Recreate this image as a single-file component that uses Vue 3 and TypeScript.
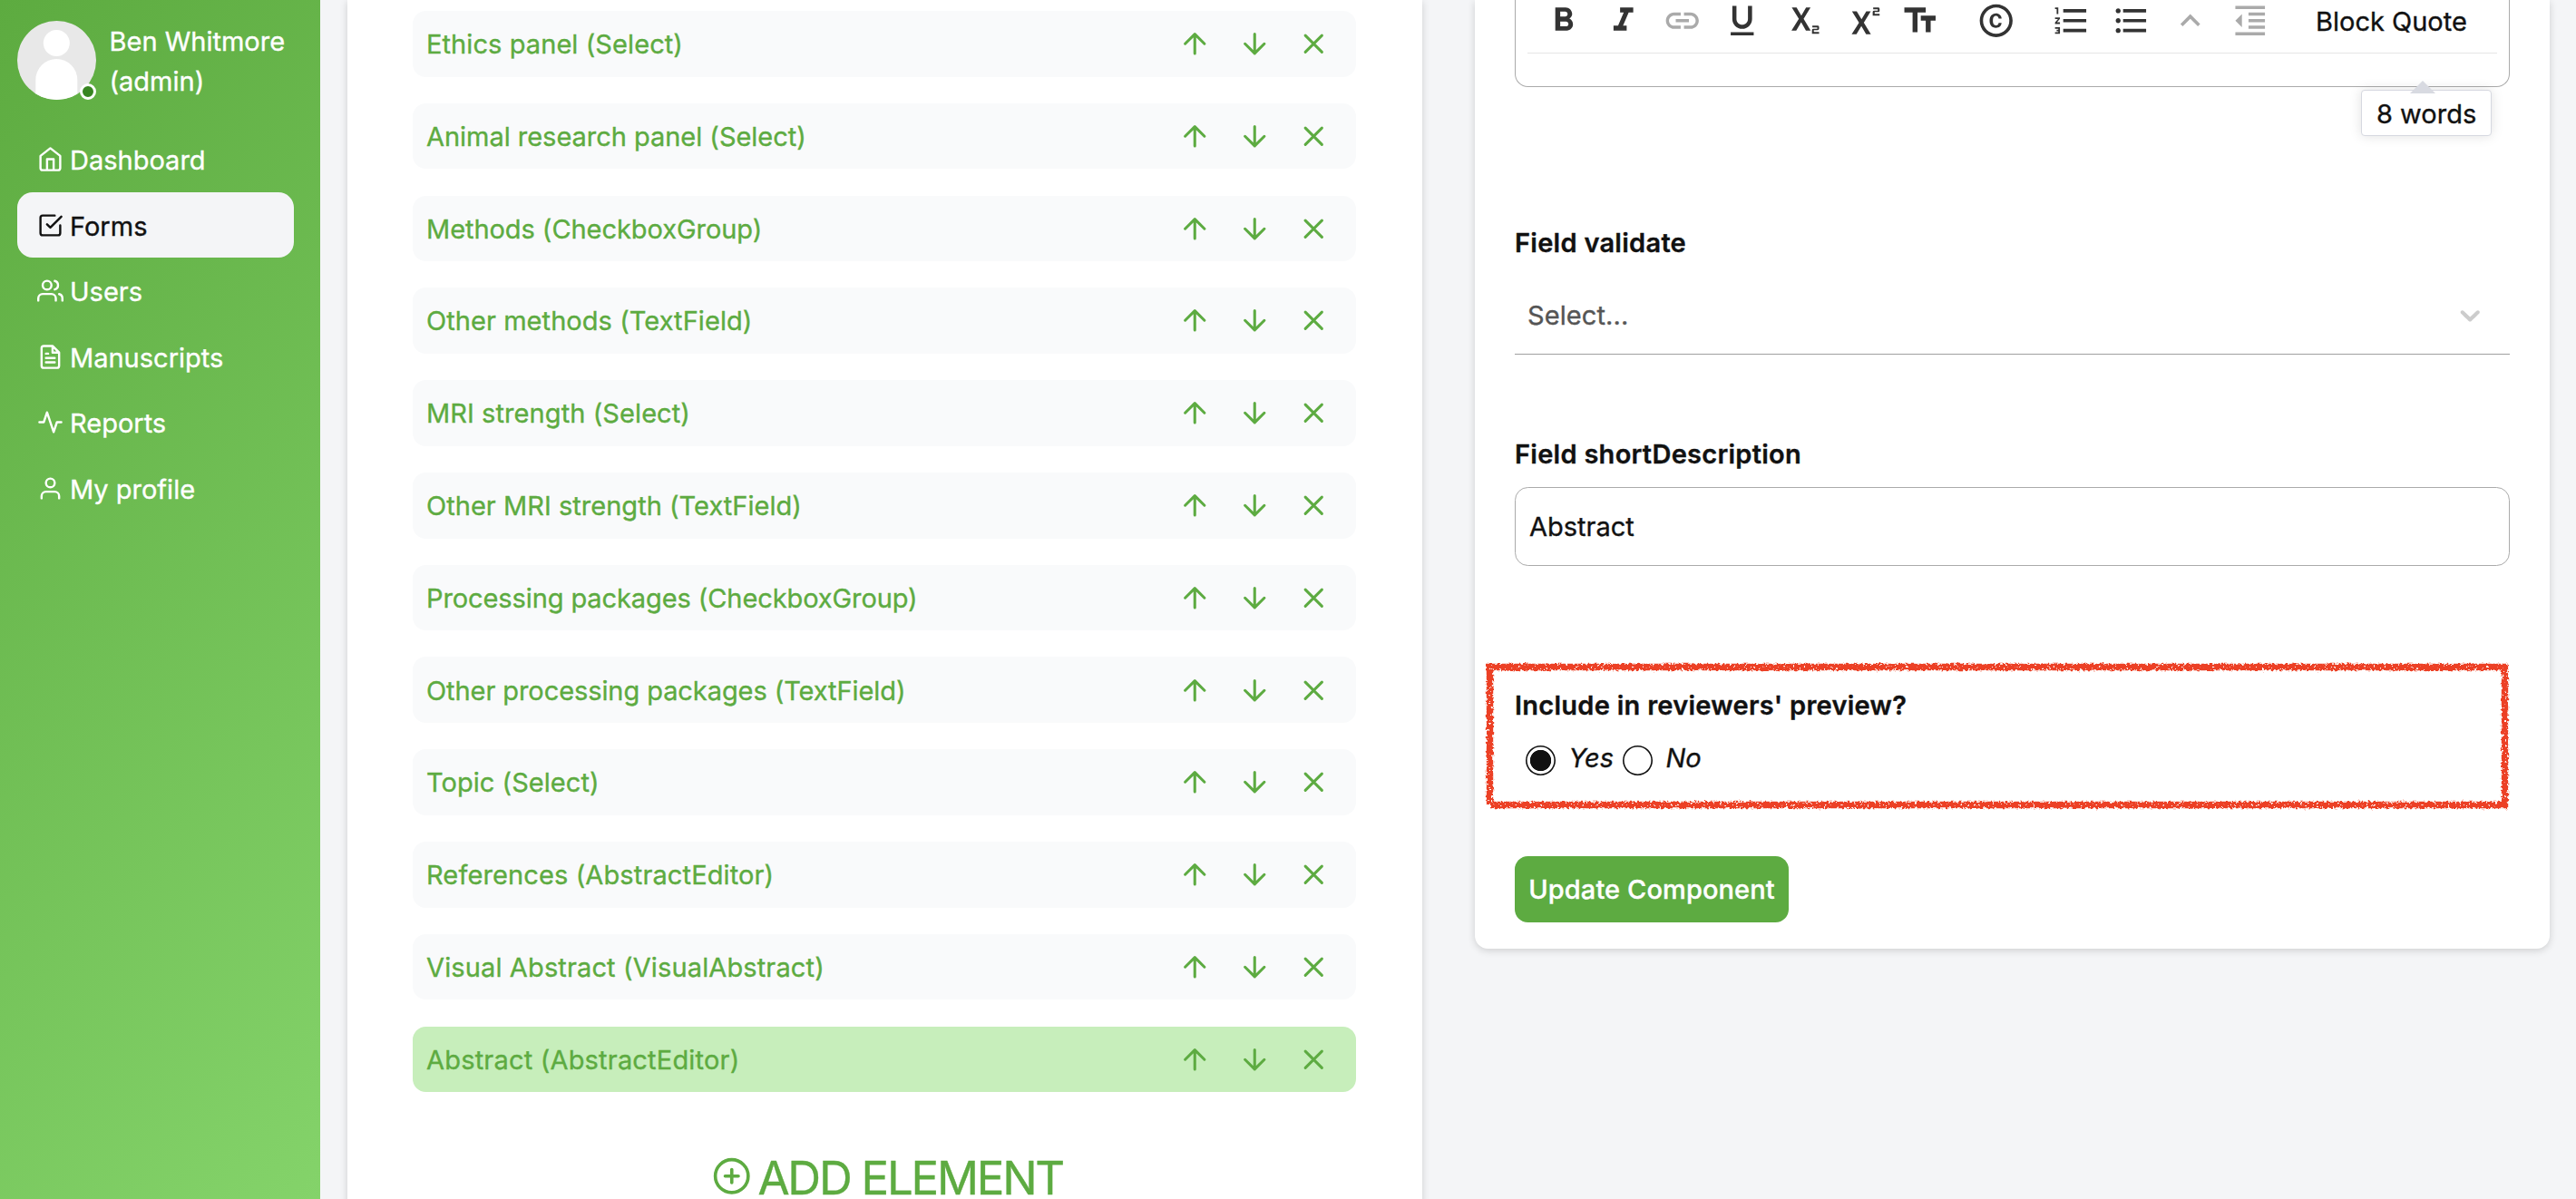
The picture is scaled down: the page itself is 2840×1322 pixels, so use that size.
<script setup lang="ts">
import { ref } from 'vue'

interface NavItem {
  label: string
  icon: string
  active?: boolean
}

const nav: NavItem[] = [
  { label: 'Dashboard', icon: 'M3 9l9-7 9 7v11a2 2 0 0 1-2 2H5a2 2 0 0 1-2-2zM9 22V12h6v10' },
  { label: 'Forms', icon: 'M9 11l3 3L22 4M21 12v7a2 2 0 0 1-2 2H5a2 2 0 0 1-2-2V5a2 2 0 0 1 2-2h11', active: true },
  { label: 'Users', icon: 'M17 21v-2a4 4 0 0 0-4-4H5a4 4 0 0 0-4 4v2M9 3a4 4 0 1 0 0 8 4 4 0 0 0 0-8zM23 21v-2a4 4 0 0 0-3-3.87M16 3.13a4 4 0 0 1 0 7.75' },
  { label: 'Manuscripts', icon: 'M14 2H6a2 2 0 0 0-2 2v16a2 2 0 0 0 2 2h12a2 2 0 0 0 2-2V8zM14 2v6h6M16 13H8M16 17H8M10 9H8' },
  { label: 'Reports', icon: 'M22 12h-4l-3 9L9 3l-3 9H2' },
  { label: 'My profile', icon: 'M20 21v-2a4 4 0 0 0-4-4H8a4 4 0 0 0-4 4v2M12 3a4 4 0 1 0 0 8 4 4 0 0 0 0-8z' },
]

interface FormElement {
  title: string
  // letter spacing in pixels
  tracking: number
}

const elements: FormElement[] = [
  { title: 'Ethics panel (Select)', tracking: 0.08 },
  { title: 'Animal research panel (Select)', tracking: -0.03 },
  { title: 'Methods (CheckboxGroup)', tracking: -0.06 },
  { title: 'Other methods (TextField)', tracking: 0.06 },
  { title: 'MRI strength (Select)', tracking: 0.08 },
  { title: 'Other MRI strength (TextField)', tracking: 0.03 },
  { title: 'Processing packages (CheckboxGroup)', tracking: -0.1 },
  { title: 'Other processing packages (TextField)', tracking: -0.08 },
  { title: 'Topic (Select)', tracking: 0.04 },
  { title: 'References (AbstractEditor)', tracking: 0.12 },
  { title: 'Visual Abstract (VisualAbstract)', tracking: 0.13 },
  { title: 'Abstract (AbstractEditor)', tracking: 0.19 },
]
const selected = ref(11)

const actions = ['M12 19V5M5 12l7-7 7 7', 'M12 5v14M19 12l-7 7-7-7', 'M18 6L6 18M6 6l12 12']

interface Tool {
  name: string
  d: string
  muted?: boolean
}

const tools: Tool[][] = [
  [
    { name: 'Bold', d: 'M15.6 10.79c.97-.67 1.65-1.77 1.65-2.79 0-2.26-1.75-4-4-4H7v14h7.04c2.09 0 3.71-1.7 3.71-3.79 0-1.52-.86-2.82-2.15-3.42zM10 6.5h3c.83 0 1.5.67 1.5 1.5s-.67 1.5-1.5 1.5h-3v-3zm3.5 9H10v-3h3.5c.83 0 1.5.67 1.5 1.5s-.67 1.5-1.5 1.5z' },
    { name: 'Italic', d: 'M10 4v3h2.21l-3.42 8H6v3h8v-3h-2.21l3.42-8H18V4z' },
    { name: 'Link', d: 'M3.9 12c0-1.71 1.39-3.1 3.1-3.1h4V7H7c-2.76 0-5 2.24-5 5s2.24 5 5 5h4v-1.9H7c-1.71 0-3.1-1.39-3.1-3.1zM8 13h8v-2H8v2zm9-6h-4v1.9h4c1.71 0 3.1 1.39 3.1 3.1s-1.39 3.1-3.1 3.1h-4V17h4c2.76 0 5-2.24 5-5s-2.24-5-5-5z', muted: true },
    { name: 'Underline', d: 'M12 17c3.31 0 6-2.69 6-6V3h-2.5v8c0 1.93-1.57 3.5-3.5 3.5S8.5 12.93 8.5 11V3H6v8c0 3.31 2.69 6 6 6zm-7 2v2h14v-2H5z' },
    { name: 'Subscript', d: 'M6.3 4h2.9l2.9 4.9L15 4h2.7l-4.2 6.9 4.3 7.1h-2.9L12 13l-3 5H6.1l4.5-7.1zM18.8 15h3.2q.9 0 .9.8v1.2q0 .8-.9.8h-2.3v1.1h3.2v1.1h-4.3v-2.3q0-.8.9-.8h2.3v-.8h-3z' },
    { name: 'Superscript', d: 'M6.5 6.3h2.9l2.9 4.9 2.9-4.9h2.7l-4.2 6.9 4.3 7.1h-2.9l-2.9-5-3 5H6.3l4.5-7.1zM19.4 4h3q.9 0 .9.8V6q0 .8-.9.8h-2.1v1.1h3V9h-4.2V6.7q0-.8.9-.8h2.2v-.8h-2.8z' },
    { name: 'Small caps', d: 'M2.5 4v3h5v12h3V7h5V4h-13zm19 5h-9v3h3v7h3v-7h3V9z' },
  ],
  [
    { name: 'Special characters', d: 'M10.08 10.86c.05-.33.16-.62.3-.87s.34-.46.59-.62c.24-.15.54-.22.91-.23.23.01.44.05.63.13.2.09.38.21.52.36s.25.33.34.53.13.42.14.64h1.79c-.02-.47-.11-.9-.28-1.29s-.4-.73-.7-1.01-.66-.5-1.08-.66-.88-.23-1.39-.23c-.65 0-1.22.11-1.7.34s-.88.53-1.2.92-.56.84-.71 1.36S8 11.29 8 11.87v.27c0 .58.08 1.12.23 1.64s.39.97.71 1.35.72.69 1.2.91 1.05.34 1.7.34c.47 0 .91-.08 1.32-.23s.77-.36 1.08-.63.56-.58.74-.94.29-.74.3-1.15h-1.79c-.01.21-.06.4-.15.58s-.21.33-.36.46-.32.23-.52.3c-.19.07-.39.1-.6.11-.36-.01-.66-.08-.89-.23-.25-.16-.45-.37-.59-.62s-.25-.55-.3-.88-.08-.67-.08-1v-.27c0-.35.03-.68.08-1.01zM12 2C6.48 2 2 6.48 2 12s4.48 10 10 10 10-4.48 10-10S17.52 2 12 2zm0 18c-4.41 0-8-3.59-8-8s3.59-8 8-8 8 3.59 8 8-3.59 8-8 8z' },
  ],
  [
    { name: 'Numbered list', d: 'M2 17h2v.5H3v1h1v.5H2v1h3v-4H2v1zm1-9h1V4H2v1h1v3zm-1 3h1.8L2 13.1v.9h3v-1H3.2L5 10.9V10H2v1zm5-6v2h14V5H7zm0 14h14v-2H7v2zm0-6h14v-2H7v2z' },
    { name: 'Bullet list', d: 'M4 10.5c-.83 0-1.5.67-1.5 1.5s.67 1.5 1.5 1.5 1.5-.67 1.5-1.5-.67-1.5-1.5-1.5zm0-6c-.83 0-1.5.67-1.5 1.5S3.17 7.5 4 7.5 5.5 6.83 5.5 6 4.83 4.5 4 4.5zm0 12c-.83 0-1.5.68-1.5 1.5s.68 1.5 1.5 1.5 1.5-.68 1.5-1.5-.67-1.5-1.5-1.5zM7 19h14v-2H7v2zm0-6h14v-2H7v2zm0-8v2h14V5H7z' },
    { name: 'Join above', d: 'M12 8l-6 6 1.41 1.41L12 10.83l4.59 4.58L18 14z', muted: true },
    { name: 'Outdent', d: 'M11 17h10v-2H11v2zm-8-5l4 4V8l-4 4zm0 9h18v-2H3v2zM3 3v2h18V3H3zm8 6h10V7H11v2zm0 4h10v-2H11v2z', muted: true },
  ],
]
</script>

<template>
  <div class="app">
    <aside class="sidebar">
      <div class="user">
        <div class="avatar">
          <svg viewBox="0 0 87 87">
            <defs><clipPath id="face"><circle cx="43.5" cy="43.5" r="43.5" /></clipPath></defs>
            <g clip-path="url(#face)">
              <rect width="87" height="87" fill="#e8e8e8" />
              <circle cx="43.3" cy="24.5" r="14.5" fill="#fff" />
              <path d="M20.3 87V65a23 23 0 0 1 46 0v22z" fill="#fff" />
            </g>
          </svg>
          <span class="status"></span>
        </div>
        <div class="name">Ben Whitmore<br />(admin)</div>
      </div>
      <nav>
        <a v-for="n in nav" :key="n.label" :class="['nav-item', { active: n.active }]">
          <svg viewBox="0 0 24 24" class="line"><path :d="n.icon" /></svg>
          <span>{{ n.label }}</span>
        </a>
      </nav>
    </aside>

    <main class="content">
      <section class="card builder">
        <ul>
          <li v-for="(el, i) in elements" :key="el.title" :class="{ selected: i === selected }" @click="selected = i">
            <span class="el-name" :style="{ letterSpacing: el.tracking + 'px' }">{{ el.title }}</span>
            <svg v-for="a in actions" :key="a" viewBox="0 0 24 24" class="line"><path :d="a" /></svg>
          </li>
        </ul>
        <div class="add">
          <svg viewBox="0 0 24 24" class="line"><circle cx="12" cy="12" r="10" /><path d="M12 8v8M8 12h8" /></svg>
          <span>ADD ELEMENT</span>
        </div>
      </section>

      <section class="card props">
        <div class="editor">
          <div class="toolbar">
            <div v-for="(g, i) in tools" :key="i" class="group">
              <svg v-for="t in g" :key="t.name" viewBox="0 0 24 24" :class="{ muted: t.muted }"><path :d="t.d" /></svg>
            </div>
            <span class="quote">Block Quote</span>
          </div>
          <div class="counter">8 words</div>
        </div>

        <div class="label validate">Field validate</div>
        <div class="select">
          <span>Select...</span>
          <svg viewBox="0 0 20 20"><path d="M4.516 7.548c0.436-0.446 1.043-0.481 1.576 0l3.908 3.747 3.908-3.747c0.533-0.481 1.141-0.446 1.574 0 0.436 0.445 0.408 1.197 0 1.615-0.406 0.418-4.695 4.502-4.695 4.502-0.217 0.223-0.502 0.335-0.787 0.335s-0.570-0.112-0.789-0.335c0 0-4.287-4.084-4.695-4.502s-0.436-1.170 0-1.615z" /></svg>
        </div>

        <div class="label short">Field shortDescription</div>
        <div class="input">Abstract</div>

        <div class="preview">
          <div class="label">Include in reviewers' preview?</div>
          <div class="radios">
            <span class="radio on"></span><em class="yes">Yes</em>
            <span class="radio"></span><em>No</em>
          </div>
          <svg class="marker" viewBox="0 0 1136 170">
            <defs>
              <filter id="crayon" x="0" y="0" width="1136" height="170" filterUnits="userSpaceOnUse" color-interpolation-filters="sRGB">
                <feTurbulence type="fractalNoise" baseFrequency="0.35" numOctaves="2" seed="7" result="n" />
                <feDisplacementMap in="SourceGraphic" in2="n" scale="5" xChannelSelector="R" yChannelSelector="G" result="d" />
                <feTurbulence type="fractalNoise" baseFrequency="0.4" numOctaves="2" seed="3" />
                <feColorMatrix values="0 0 0 0 0  0 0 0 0 0  0 0 0 0 0  0 0 0 -14 10.2" result="m" />
                <feComposite in="d" in2="m" operator="in" />
              </filter>
            </defs>
            <g filter="url(#crayon)" stroke="#ec4025" stroke-width="7.4" fill="none">
              <path d="M4 8.5H1131M8.5 5V160M9 160.5H1131M1127.5 5V164" />
            </g>
          </svg>
        </div>

        <button>Update Component</button>
      </section>
    </main>
  </div>
</template>

<style>
body {
  margin: 0;
  background: #f4f5f7;
}
</style>

<style scoped>
.app {
  display: flex;
  width: 2840px;
  height: 1322px;
  overflow: hidden;
  background: #f4f5f7;
  color: #111;
  font: 400 29px/43.5px Inter, 'Noto Sans', sans-serif;
  -webkit-text-stroke: 0.35px currentColor;
}
svg {
  display: block;
  flex: none;
}
.line {
  fill: none;
  stroke: currentColor;
  stroke-width: 2;
  stroke-linecap: round;
  stroke-linejoin: round;
}
.sidebar {
  flex: none;
  box-sizing: border-box;
  width: 353px;
  padding: 23px 29px 0 19px;
  background: linear-gradient(134deg, #5dab40, #84d36a);
  color: #fff;
}
.user {
  display: flex;
  gap: 14.5px;
  height: 116.3px;
}
.avatar {
  position: relative;
  width: 87px;
  height: 87px;
}
.avatar svg {
  width: 87px;
  height: 87px;
}
.status {
  position: absolute;
  right: 0;
  bottom: 0;
  box-sizing: border-box;
  width: 18px;
  height: 18px;
  border: 3px solid #fff;
  border-radius: 50%;
  background: #378521;
}
.name {
  padding-top: 1px;
  white-space: nowrap;
}
.nav-item {
  display: flex;
  align-items: center;
  box-sizing: border-box;
  height: 72.6px;
  padding-left: 22px;
  gap: 7px;
  border-radius: 17px;
}
.nav-item span {
  padding-top: 2px;
}
.nav-item svg {
  width: 29px;
  height: 29px;
}
.nav-item.active {
  background: #f4f5f7;
  color: #111;
}
.nav-item.active span {
  padding-top: 3px;
}
.content {
  display: flex;
  align-items: flex-start;
  gap: 58px;
  padding-left: 30px;
}
.card {
  box-sizing: border-box;
  width: 1185px;
  background: #fff;
  box-shadow: 0 2px 8px rgba(0, 0, 0, 0.16);
}
.builder {
  height: 1400px;
  padding: 12px 73px 0 72px;
}
ul {
  display: flex;
  flex-direction: column;
  gap: 29.2px;
  margin: 0;
  padding: 0;
  list-style: none;
}
li {
  display: flex;
  align-items: center;
  gap: 28.9px;
  box-sizing: border-box;
  height: 72.6px;
  padding: 0 28.5px 0 15px;
  border-radius: 14.5px;
  background: #f9fafb;
  color: #5dab41;
}
li.selected {
  background: #c7eebb;
}
li svg {
  width: 36.5px;
  height: 36.5px;
}
.el-name {
  flex: 1;
  padding-top: 1px;
}
.add {
  display: flex;
  justify-content: center;
  align-items: center;
  gap: 7px;
  margin: 53.5px 0 0 7px;
  color: #5dab41;
  font-size: 51px;
  line-height: 76px;
  letter-spacing: -2.25px;
}
.add span {
  padding-top: 3px;
}
.add svg {
  width: 43.5px;
  height: 43.5px;
}
.props {
  height: 1046px;
  padding: 0 44px;
  border-radius: 0 0 14.5px 14.5px;
}
.editor {
  position: relative;
  box-sizing: border-box;
  height: 96px;
  padding: 0 13px;
  border: 1px solid #aaa;
  border-top: 0;
  border-radius: 0 0 14.5px 14.5px;
}
.toolbar {
  display: flex;
  align-items: center;
  gap: 40px;
  height: 45px;
  padding: 0 0 13px 18px;
  border-bottom: 1px solid #e5e5e5;
}
.group {
  display: flex;
  gap: 22px;
}
.toolbar svg {
  width: 43.5px;
  height: 43.5px;
  fill: #333;
}
.toolbar svg.muted {
  fill: #aaa;
}
.quote {
  margin-left: 11px;
  padding-top: 2px;
}
.counter {
  position: absolute;
  right: 19.5px;
  top: 99px;
  box-sizing: border-box;
  width: 144px;
  height: 51px;
  padding-left: 16.5px;
  border: 1px solid #d6d8e0;
  border-radius: 4px;
  background: #fff;
  box-shadow: 0 0 14px rgba(0, 0, 0, 0.12);
  line-height: 51px;
}
.counter::before {
  content: '';
  position: absolute;
  left: 53px;
  top: -11px;
  border: 14px solid transparent;
  border-top: 0;
  border-bottom-color: #d8dae1;
}
.label {
  font-weight: 600;
  letter-spacing: 0.27px;
}
.validate {
  margin-top: 150px;
}
.select {
  display: flex;
  align-items: center;
  justify-content: space-between;
  box-sizing: border-box;
  height: 87px;
  margin-top: 14.5px;
  padding: 0 25.5px 0 14px;
  border-bottom: 1px solid #a0a0a0;
  color: #555;
}
.select span {
  padding-top: 1px;
  letter-spacing: 0.1px;
}
.select svg {
  width: 36.5px;
  height: 36.5px;
  fill: #ccc;
}
.short {
  margin-top: 88px;
}
.input {
  display: flex;
  align-items: center;
  box-sizing: border-box;
  height: 87px;
  margin-top: 14.5px;
  padding: 1px 0 0 15px;
  border: 1px solid #aaa;
  border-radius: 14.5px;
}
.preview {
  position: relative;
  margin-top: 132px;
}
.radios {
  display: flex;
  align-items: center;
  margin-top: 14.5px;
  padding-left: 12px;
}
.radio {
  box-sizing: border-box;
  width: 33px;
  height: 33px;
  margin: 6px 14.5px 0 0;
  border-radius: 50%;
  box-shadow: inset 0 0 0 1.6px #111;
}
.radio.on {
  background: radial-gradient(circle, #111 11.3px, transparent 12px);
}
.yes {
  margin-right: 10px;
}
.marker {
  position: absolute;
  left: -36px;
  top: -28.7px;
  width: 1136px;
  height: 170px;
}
button {
  display: block;
  box-sizing: border-box;
  width: 302px;
  height: 73px;
  margin: 86.5px 0 0;
  padding: 1px 0 0;
  border: 0;
  border-radius: 14.5px;
  background: #5dab41;
  color: #fff;
  font: inherit;
  font-weight: 500;
  letter-spacing: 0.1px;
  white-space: nowrap;
}
</style>
